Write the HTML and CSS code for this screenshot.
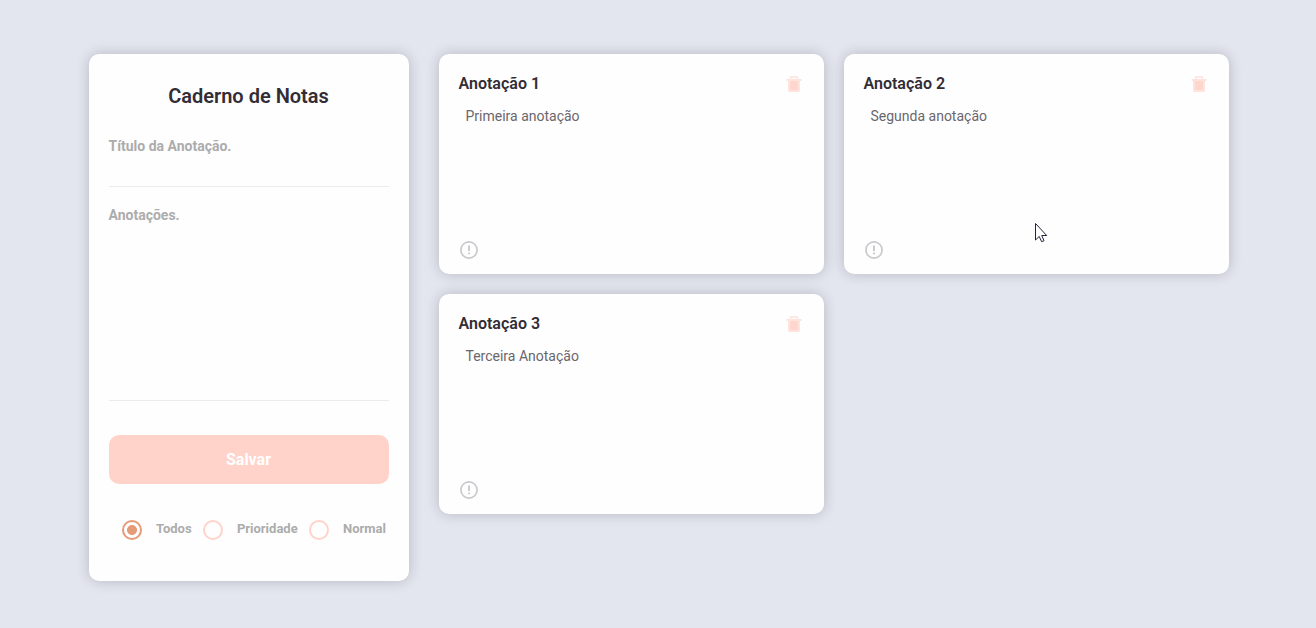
FILE: index.html
```html
<!DOCTYPE html>
<html lang="pt-BR">
<head>
<meta charset="utf-8">
<title>Caderno de Notas</title>
<link rel="stylesheet" href="styles.css">
</head>
<body>
<svg class="defs" width="0" height="0" aria-hidden="true">
  <symbol id="trash" viewBox="0 0 16 16">
    <path d="M4.600 3.500V1h6.800v2.500" fill="none" stroke="#ffe2dc" stroke-width="1.400"/>
    <path d="M.5 3h15v2h-15z" fill="#ffe2dc"/>
    <path d="M2 4h12v10.500a1.500 1.500 0 0 1-1.500 1.500h-9A1.500 1.500 0 0 1 2 14.500z" fill="#ffe4de"/>
    <path d="M4 5h8v9H4z" fill="#ffd6ce"/>
  </symbol>
  <symbol id="alert" viewBox="0 0 20 20">
    <circle cx="10" cy="10" r="8.1" fill="none" stroke="#c9c9cd" stroke-width="1.700"/>
    <path d="M10 5.600v5.400M10 12.500v1.800" stroke="#c9c9cd" stroke-width="1.900"/>
  </symbol>
</svg>
<div class="app">
  <aside class="sidebar">
    <h1 class="heading">Caderno de Notas</h1>
    <form class="form">
      <label class="label" for="title">Título da Anotação.</label>
      <input class="title-input" id="title">
      <label class="label" for="notes">Anotações.</label>
      <textarea class="notes-input" id="notes"></textarea>
      <button class="save" type="button">Salvar</button>
    </form>
    <div class="filters">
      <label class="filter"><input class="radio" type="radio" name="filter" checked><span>Todos</span></label>
      <label class="filter"><input class="radio" type="radio" name="filter"><span>Prioridade</span></label>
      <label class="filter"><input class="radio" type="radio" name="filter"><span>Normal</span></label>
    </div>
  </aside>
  <main class="notes">
    <article class="note">
      <header class="note-head"><h2 class="note-title">Anotação 1</h2><svg class="trash"><use href="#trash"/></svg></header>
      <p class="note-text">Primeira anotação</p>
      <svg class="alert"><use href="#alert"/></svg>
    </article>
    <article class="note">
      <header class="note-head"><h2 class="note-title">Anotação 2</h2><svg class="trash"><use href="#trash"/></svg></header>
      <p class="note-text">Segunda anotação</p>
      <svg class="alert"><use href="#alert"/></svg>
    </article>
    <article class="note">
      <header class="note-head"><h2 class="note-title">Anotação 3</h2><svg class="trash"><use href="#trash"/></svg></header>
      <p class="note-text">Terceira Anotação</p>
      <svg class="alert"><use href="#alert"/></svg>
    </article>
  </main>
</div>
<svg class="cursor" viewBox="0 0 13 20"><path d="M.5.5v16.500l3.700-3.600 2.400 5.300 2.400-1-2.300-5.200h5z" fill="#fff" stroke="#23233a"/></svg>
</body>
</html>
```

FILE: styles.css
```css
* {
  box-sizing: border-box;
  margin: 0;
  padding: 0;
}

body {
  min-height: 100vh;
  background: #e3e6ef;
  color: #322d35;
  font-family: Roboto, sans-serif;
  overflow: hidden;
}

.defs {
  position: absolute;
}

.app {
  display: flex;
  align-items: flex-start;
  gap: 30px;
  padding: 54px 87px 0 89px;
}

.sidebar {
  width: 320px;
  height: 527px;
  padding: 30px 20px;
  background: #fefefe;
  border-radius: 10px;
  box-shadow: 0 0 14px rgba(0, 0, 0, 0.2);
}

.heading {
  margin-left: -1px;
  font-size: 20px;
  font-weight: 600;
  line-height: 24px;
  text-align: center;
}

.form {
  display: flex;
  flex-direction: column;
  margin-top: 30px;
}

.label {
  margin-left: -0.5px;
  color: #acacac;
  font-size: 14px;
  font-weight: 700;
  line-height: 16px;
}

.title-input,
.notes-input {
  width: 100%;
  border: 0;
  border-bottom: 1px solid #ebebeb;
  background: transparent;
  font: 14px Roboto, sans-serif;
  resize: none;
  outline: none;
}

.title-input {
  height: 33px;
  margin-bottom: 20px;
}

.notes-input {
  height: 178px;
}

.save {
  height: 49px;
  margin-top: 34px;
  padding-right: 1px;
  border: 0;
  border-radius: 10px;
  background: #ffd3ca;
  color: #fff;
  font: 700 16px Roboto, sans-serif;
}

.filters {
  display: flex;
  gap: 11.3px;
  margin: 35px 0 0 13px;
}

.filter {
  display: flex;
  gap: 14px;
  color: #acacac;
  font-size: 13px;
  font-weight: 700;
  line-height: 20px;
}

.radio {
  flex: none;
  width: 20px;
  height: 20px;
  margin-top: 1px;
  border: 2px solid #ffd3ca;
  border-radius: 50%;
  appearance: none;
}

.radio:checked {
  border-color: #e59a78;
  background: radial-gradient(circle, #e59a78 4.6px, transparent 5.3px);
}

.notes {
  display: grid;
  grid-template-columns: repeat(2, 385px);
  gap: 20px;
}

.note {
  display: flex;
  flex-direction: column;
  height: 220px;
  padding: 20px 20px 14px;
  background: #fefefe;
  border-radius: 10px;
  box-shadow: 0 0 14px rgba(0, 0, 0, 0.2);
}

.note-head {
  display: flex;
  justify-content: space-between;
}

.note-title {
  margin-left: -0.5px;
  font-size: 16px;
  font-weight: 600;
  line-height: 20px;
}

.trash {
  width: 16px;
  height: 16px;
  margin: 2px 2px 0 0;
}

.note-text {
  margin: 14px 0 0 6.5px;
  color: #6b666c;
  font-size: 14px;
  line-height: 16px;
}

.alert {
  width: 20px;
  height: 20px;
  margin-top: auto;
}

.cursor {
  position: absolute;
  left: 1035px;
  top: 223px;
  width: 13px;
  height: 20px;
}
```
